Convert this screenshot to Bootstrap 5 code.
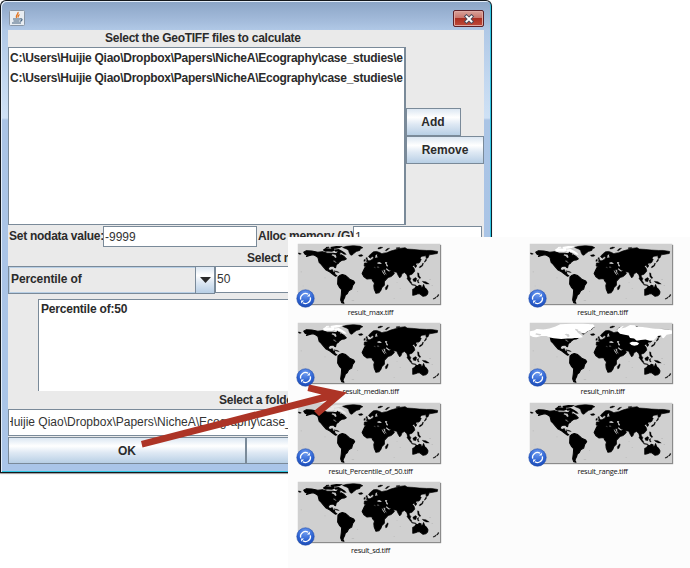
<!DOCTYPE html>
<html lang="en">
<head>
<meta charset="utf-8">
<title>GeoTIFF calculation</title>
<link href="https://cdn.jsdelivr.net/npm/bootstrap@5.3.0/dist/css/bootstrap.min.css" rel="stylesheet">
<style>
body{width:690px;height:568px;background:#fff;font:12px/1 "Liberation Sans",Arial,sans-serif;color:#2b2b2b}
.stage{width:690px;height:568px}
.win{width:492px;height:473px;border:1px solid #14181c;border-right:1px solid #10202a;border-radius:6px 6px 0 0;padding:0 6px 8px 6px;
 background:linear-gradient(#8ba5c6 0,#a1b9d9 18px,#b0c8e6 29px,#c3d8f0 80px,#cfe1f5 117px,#aac4e5 119px,#aac5e8 100%);
 box-shadow:inset 1px 1px 0 #e3eefa,inset -1px -1px 0 #2fc6e2,0 1px 1px #999}
.title-strip{height:29px;padding-top:9px}
.java{width:16px;height:16px;margin-left:2px}
.close-btn{width:31px;height:17px;border:1px solid #5b2129;border-radius:2px;background:linear-gradient(#d9a29a,#c9746a 48%,#aa2f22 50%,#c04a3a);box-shadow:inset 0 0 0 1px #e0a9a2;margin-right:1px}
.pane{background:#eaeaea;width:476px;height:434px;margin-left:1px}
.bold{font-weight:700;white-space:nowrap;letter-spacing:-.26px}
.head{height:17px;line-height:17px;padding-left:97px}
.list-main{width:398px;height:178px;border:1px solid #7a8a99;border-right-width:2px;background:#fff;padding:1px 0 0 1px;overflow:hidden}
.list-main div{height:20px;line-height:18px}
.jbtn{border:1px solid #7a8a99;background:linear-gradient(#dce7f2 0,#fff 32%,#dfe9f4 58%,#b8cfe5 100%);height:28px;line-height:26px;font-weight:700;text-align:center}
.side{padding-top:61px}
.add{width:55px;padding-right:1px}
.remove{width:78px}
.field{border:1px solid #7a8a99;background:#fff;overflow:hidden;white-space:nowrap;color:#333}
.row-nodata{height:22px;margin-top:1px}
.nodata,.alloc{line-height:21px}
.nodata{width:95px;padding-left:1px}
.nd{width:154px;height:21px;line-height:20px;padding-left:1px}
.alloc{width:96px;padding-left:1px}
.mem{height:21px;line-height:20px;padding-left:1px;margin-right:2px}
.sel-label{height:18px;line-height:20px}
.method{padding-left:239px}
.combo{width:207px;height:28px;border:1px solid #7a8a99;box-shadow:inset 0 0 0 1px #b8cfe5;line-height:24px;padding-left:2px;letter-spacing:-.1px}
.combo-arrow{width:19px;height:26px;border-left:1px solid #7a8a99;background:linear-gradient(#dce7f2,#fff 32%,#dfe9f4 58%,#b8cfe5)}
.pct{height:27px;line-height:25px;padding-left:1px}
.params{margin:5px 0 0 30px;height:93px;border:1px solid #7a8a99;border-bottom:0;background:#fff;padding:1px 0 0 2px;line-height:16px;letter-spacing:-.2px}
.folder{padding-left:211px;line-height:18px}
.path{height:27px;line-height:25px;padding-left:1px}
.path-clip{overflow:hidden;width:470px}
.path-clip span{margin-left:-5px}
.acts{margin-top:1px}
.acts .jbtn{height:27px}
.results{left:288px;top:237px;width:402px;height:331px;background:#fcfcfc;padding:7px 0 0 10px}
.thumb-grid{display:grid;grid-template-columns:142px 142px;column-gap:90px;grid-auto-rows:79.3px}
.thumb-map{display:block;width:142px;height:60px;background:#d0d0d0;box-shadow:1px 1px 1px #8b8b8b,0 0 1px #bbb}
.sync{left:-2px;top:45px;width:19px;height:19px}
.cap{font:500 7.5px/9px "Open Sans","Noto Sans",sans-serif;letter-spacing:-.28px;color:#111;text-align:center;margin:4px 0 0 3px;white-space:nowrap}
.pointer{left:0;top:0;pointer-events:none}
</style>
<script src="https://cdn.jsdelivr.net/npm/bootstrap@5.3.0/dist/js/bootstrap.bundle.min.js"></script>
</head>
<body class="m-0 overflow-hidden">
<svg width="0" height="0" class="position-absolute">
 <defs>
  <radialGradient id="blue" cx=".5" cy=".25" r=".8"><stop offset="0" stop-color="#6f9cf0"/><stop offset=".6" stop-color="#2c62d2"/><stop offset="1" stop-color="#1b48b0"/></radialGradient>
  <g id="sync"><circle cx="10" cy="10" r="9.2" fill="url(#blue)" stroke="#2450ad" stroke-width=".6"/><path d="M4.900 11.200A5.200 5.200 0 0 1 12.800 5.600M15.100 8.800A5.200 5.200 0 0 1 7.200 14.400" fill="none" stroke="#fff" stroke-width="1.300"/><path d="M14.600 4.800v3h-3zM5.400 15.200v-3h3z" fill="#fff"/></g>
  <g id="arctic"><path d="M116 45l8-5 12 1 12-1 4 7-9 4-12-1-8 1-5-3zM151 44l12-1 10 5 9 6 5 6-8-1-8-5-8 0-3-4-7 1zM138 37l18-3 20 1-10 5-11 2-8-1-5 1zM124 37l10-1 2 3-10 1z"/></g>
  <path id="green" stroke="#000" stroke-width="2" d="M175 38l12-3 20-2 20 2 8 4-7 3-2 5-10 3-8 6-5 5-5-1-4-8-1-5-6-4z"/>
  <g id="land" stroke="#000" stroke-width="3" stroke-linejoin="round">
   <path d="M59 52l8-4 16 1 18 3 14-1 14 4 17 0 10 2 6-7 5 4-2 8 6-2 7 4 8 8-6 3-8 1-7 5-3 4-6 4-2 9-3-1-3-4-11 1-5 6 4 7 8-3 1 6 6 2 1 6 6 4-5 1-8-6-9-7-10-5-8-9-8-9-5-5-2-8-2-7-8-5-7-2-9 2-10 3 3-4-7-3z"/>
   <path d="M149 107l10 2 6 3-7-1-10-3zM44 54l8 3-4 2-5-2z" stroke-width="1"/>
   <path d="M161 126l5-5 8-3 10 3 8 7 4 4 12 5 3 5-6 8-3 11-9 5-4 8-6 5-2 7-4 8-1 4 3 5-7-2-3-8 2-16 1-14-7-8-5-9z"/>
   <path d="M241 98l10-4 15-2 2 6 10 3 4-2 11 2 5 11 6 8 9-1-5 10-9 9 0 11-7 7-3 8-6 8-9 1-5-12-1-10 2-8-6-7-2-6-15 1-9-7-5-9z"/>
   <path d="M309 148l2 3-4 11-4 1-1-6zM222 61l9-2 5 3-6 3-6-1zM244 69l4-1 1 5 4 6-8 1 2-5zM239 74l4 0-1 5-4 0z" stroke-width="1"/>
   <path stroke-width="2" d="M239 93l1-9 8 0 1-5 8-2 7-4 4-5-5-3-6 5-5-5 6-7 9-7 9-1 9 3 7 4 5-2 9-1 12-5 14-4 13-4 16-2 6 4 18 1 18 2 22 1 14 0 19 3-1 6-12 2-12 2-4 9-5 1-1-7-12 1-6 6 4 3-4 9-9 5-2 9-3 1-3-7-5 4 5 6 2 8-8 9-9 3 1 5 4 5-3 7-5-4-2-8-3-8-6-5-7 4-3 8-4 4-5-8-4-9-9-1 2 6-9 8-9 3-4-7-5-10 1-6-12 0-5-2-1-3-5-5-3 1 3 5-3 3-5-7-6-1-4 2-3 6z"/>
   <path d="M384 162l6-3 4-6 5 1 4-4 6 2-1 4 5 1 3-9 3 9 6 5 4 7-1 6-6 6-8 1-5-4-4-3-7 0-7 3-7 1z"/>
   <path stroke-width="1" d="M366 129l4 0 10 12 2 5-5-2zM384 132l8-5 4 3-3 9-7-1zM380 147l13 2 1 2-13-2zM397 135l5-2-2 4 3 6-4-1zM412 138l11 1 10 7-9 0-8-4zM398 113l4 1 1 8 5 6-4 2-5-6zM413 85l3 0-3 8-6 4-4 1 2-4 6-3zM424 71l1 5-5 6-2-1zM459 177l3 1-4 6-2 0zM449 187l6-4-3 5-7 3 0-2zM280 40l8-3 7 1-8 4-6 1zM302 47l5-5 8-2-6 6-5 3zM335 39l10-1-1 3-9 1z"/>
  </g>
  <g id="seas" fill="#c4c4c4"><path d="M278 83l6-2 8 4-4 2-9-1zM302 81l6 1-2 5 4 4-1 4-4-2-1-5-3-4zM305 99l9 7 5 1-6 2-8-5zM291 104l5 6 5 9-1 1-6-8zM144 58l10 2 3 7-4 2-4-5-7-3zM273 61l5-3-1 7 4 1-9 3zM361 118l3 0 3 8-2 0zM394 86l5-2-2 5-3 1z"/><path d="M147 77l8 1-3 2 6 2-4 1-7-4z" fill="#777"/></g>
  <g id="specks" fill="#b9b9b9"><path d="M50 109h4v2h-4zM56 151h3v2h-3zM76 174h3v2h-3zM121 127h3v2h-3zM218 167h3v2h-3zM336 140h2v2h-2zM345 158h3v2h-3zM440 150h4v2h-4zM433 132h5v2h-5zM327 188h3v2h-3zM202 194h7v2h-7z"/></g>
  <g id="world"><use href="#specks"/><use href="#land"/><use href="#green"/><use href="#seas"/></g>
  <g id="snow"><path fill="#d0d0d0" d="M42 44h46v30H66l-24-4z"/><path fill="#fff" d="M42 52l12-2 8-4 20 1 18-3 18-6 14-6 34-2 34 0 30 2 6 6-8 5-5 6-10 3-8 7-9-1-5-6-8-2-2 5 8 5 8 6 2 4-14 2-10 0-8 2-14 0-18 1-22-2-12-2-10-5-16 0-14 4-10-1-9-4-2-6z"/><path fill="#d0d0d0" d="M150 60l8 1 2 6-5 3-4-5-6-3zM186 48l-8-3-2 3 8 6zM60 58l16 3-4 4-14-3z"/><path fill="#fff" d="M302 46l12-8 8-2-8 8 12-3 14-7 14 1 4 4 20 1 20 3 28 2 24 2 15 3v10l-16 3-9 10-5-2-1-6-12 1-6 8-8 6-10 0-12-3-14 1-12 2-8-6-12-2-4-7-12-2-14-3-6-6z"/><path d="M338 87l8-4 14 1 7 4-4 5-10 2-9-2z" fill="#fff"/></g>
 </defs>
</svg>

<main class="stage position-relative">
 <section class="win">
  <header class="title-strip d-flex justify-content-between align-items-start">
   <svg class="java" viewBox="0 0 16 16"><rect x=".5" y=".5" width="15" height="15" rx="1" fill="#e8edf2" stroke="#8996a5"/><path d="M9 2C10 4 6 5 7.500 8M10.500 4.500C9 5.500 8.500 6 9.300 7.500" fill="none" stroke="#e2731d" stroke-width="1.300"/><path d="M4 9h7M4.500 11h6M3 13h9M11 9c3-1 2.500 2 0 2.200" fill="none" stroke="#44627f" stroke-width="1.100"/></svg>
   <div class="close-btn d-flex align-items-center justify-content-center"><svg width="12" height="10" viewBox="0 0 12 10"><path d="M3.500 2.500l5 5M8.500 2.500l-5 5" stroke="#4b4c5c" stroke-width="3.800" stroke-linecap="square"/><path d="M3.500 2.500l5 5M8.500 2.500l-5 5" stroke="#fff" stroke-width="1.900" stroke-linecap="square"/></svg></div>
  </header>
  <div class="pane d-flex flex-column">
   <div class="head bold">Select the GeoTIFF files to calculate</div>
   <div class="d-flex">
    <div class="list-main bold"><div>C:\Users\Huijie Qiao\Dropbox\Papers\NicheA\Ecography\case_studies\e</div><div>C:\Users\Huijie Qiao\Dropbox\Papers\NicheA\Ecography\case_studies\e</div></div>
    <div class="d-flex flex-column align-items-start side"><div class="jbtn add">Add</div><div class="jbtn remove">Remove</div></div>
   </div>
   <div class="row-nodata d-flex">
    <span class="bold nodata">Set nodata value:</span><div class="field nd">-9999</div>
    <span class="bold alloc">Alloc memory (G)</span><div class="field flex-grow-1 mem">1</div>
   </div>
   <div class="sel-label bold method">Select method</div>
   <div class="d-flex">
    <div class="combo bold d-flex justify-content-between"><span>Percentile of</span><span class="combo-arrow d-flex align-items-center justify-content-center"><svg width="11" height="6"><path d="M0 0h11L5.500 6z" fill="#2b2b2b"/></svg></span></div>
    <div class="field flex-grow-1 pct">50</div>
   </div>
   <div class="params bold">Percentile of:50</div>
   <div class="sel-label bold folder">Select a folder</div>
   <div class="field path d-flex"><div class="path-clip"><span>Huijie Qiao\Dropbox\Papers\NicheA\Ecography\case_studies</span></div></div>
   <div class="d-flex acts"><div class="jbtn flex-fill w-50">OK</div><div class="jbtn flex-fill w-50"></div></div>
  </div>
 </section>

 <section class="results position-absolute">
  <div class="thumb-grid" id="grid"></div>
 </section>
 <svg class="pointer position-absolute" width="690" height="568" viewBox="0 0 690 568"><path d="M141 441L321.500 394.500 307.500 391 309 384.500 347 392.500 319 416 314 411 327 400.500 142.500 447.500z" fill="#ad3426"/></svg>
</main>
<script>
// name, colour of the arctic islands, whether the northern snow layer is drawn
const items = [["result_max.tiff","#000",0],["result_mean.tiff","#fff",0],["result_median.tiff","#fff",0],["result_min.tiff","#fff",1],["result_Percentile_of_50.tiff","#e8e8e8",0],["result_range.tiff","#000",0],["result_sd.tiff","#000",0]];
const cell = ([name, ice, snow]) => `<figure class="m-0 position-relative"><svg class="thumb-map" preserveAspectRatio="none" viewBox="42 28 423 177"><use href="#world"/><use href="#arctic" fill="${ice}"/>${snow ? '<use href="#snow"/>' : ''}</svg><svg class="sync position-absolute" viewBox="0 0 20 20"><use href="#sync"/></svg><figcaption class="cap">${name}</figcaption></figure>`;
document.getElementById("grid").innerHTML = items.map(cell).join("");
</script>
</body>
</html>
